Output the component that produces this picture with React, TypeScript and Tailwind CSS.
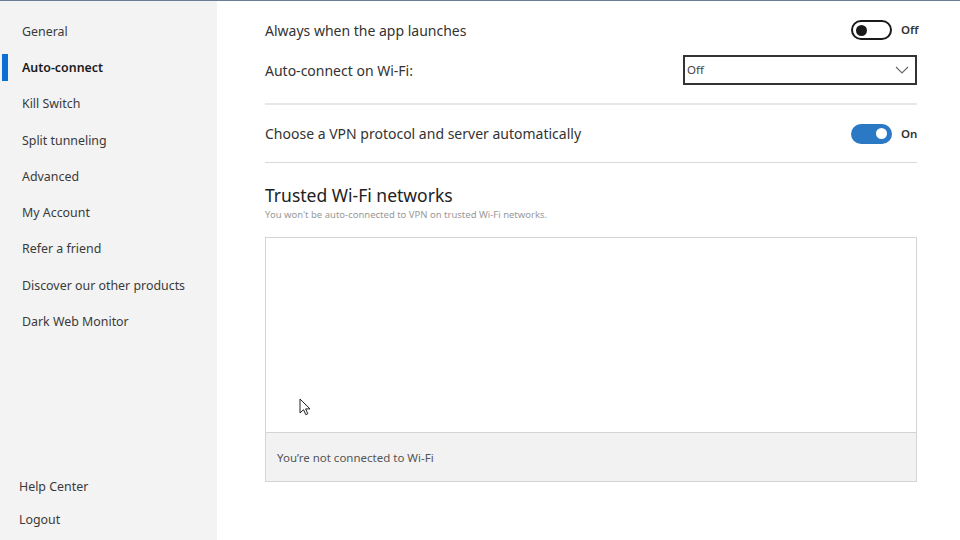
import React from "react";

const font = { fontFamily: '"Noto Sans", "Open Sans", sans-serif' };

function NavItem({ label, active }: { label: string; active?: boolean }) {
  return (
    <div className="relative flex h-[36.25px] items-center pl-[22px]">
      {active && <div className="absolute left-[2px] top-[4px] h-[27px] w-[6px] bg-[#0c6fd4]" />}
      <span className={`text-[12.4px] ${active ? "font-semibold text-[#1a1a1a]" : "text-[#3a3a3a]"}`}>{label}</span>
    </div>
  );
}

function Toggle({ on }: { on: boolean }) {
  return (
    <div className="flex items-center gap-[9px]">
      {on ? (
        <div className="flex h-[20px] w-[41px] items-center justify-end rounded-full bg-[#2b78c5] pr-[5px]">
          <div className="h-[11px] w-[11px] rounded-full bg-white" />
        </div>
      ) : (
        <div className="flex h-[20px] w-[41px] items-center rounded-full border-2 border-[#1a1a1a] pl-[3px]">
          <div className="h-[11px] w-[11px] rounded-full bg-[#1a1a1a]" />
        </div>
      )}
      <span className="w-[16px] text-[11.5px] font-semibold text-[#333]">{on ? "On" : "Off"}</span>
    </div>
  );
}

export default function App() {
  const items = [
    "General",
    "Auto-connect",
    "Kill Switch",
    "Split tunneling",
    "Advanced",
    "My Account",
    "Refer a friend",
    "Discover our other products",
    "Dark Web Monitor",
  ];
  return (
    <div style={font} className="relative flex h-[540px] w-[960px] flex-col overflow-hidden bg-white">
      <div className="h-[1px] w-full bg-[#6b7c99]" />
      <div className="flex flex-1">
        <aside className="flex w-[217px] flex-col bg-[#f3f3f3] pt-[13px]">
          {items.map((l) => (
            <NavItem key={l} label={l} active={l === "Auto-connect"} />
          ))}
          <div className="flex-1" />
          <div className="flex flex-col pb-[3px] pl-[19px]">
            <div className="flex h-[33px] items-center text-[12.4px] text-[#3a3a3a]">Help Center</div>
            <div className="flex h-[33px] items-center text-[12.4px] text-[#3a3a3a]">Logout</div>
          </div>
        </aside>
        <main className="flex w-[700px] flex-col pl-[48px]">
          <div className="flex h-[38px] items-center justify-between pt-[20px]">
            <span className="text-[14px] text-[#333]">Always when the app launches</span>
            <Toggle on={false} />
          </div>
          <div className="flex h-[48px] items-center justify-between pt-[14px]">
            <span className="text-[14px] text-[#333]">Auto-connect on Wi-Fi:</span>
            <div className="flex h-[30px] w-[234px] items-center justify-between border-2 border-[#333] pl-[2px] pr-[6px]">
              <span className="text-[11.5px] text-[#444]">Off</span>
              <svg width="14" height="8" viewBox="0 0 14 8" fill="none" stroke="#666" strokeWidth="1.1">
                <path d="M1 1l6 6 6-6" />
              </svg>
            </div>
          </div>
          <div className="mt-[16px] h-[2px] w-full bg-[#e8e8e8]" />
          <div className="flex h-[57px] items-center justify-between">
            <span className="text-[14px] text-[#333]">Choose a VPN protocol and server automatically</span>
            <Toggle on={true} />
          </div>
          <div className="h-[1px] w-full bg-[#d9d9d9]" />
          <div className="mt-[21px] text-[17.5px] leading-[22px] text-[#222]">Trusted Wi-Fi networks</div>
          <div className="mt-[2px] text-[9.5px] text-[#999]">You won't be auto-connected to VPN on trusted Wi-Fi networks.</div>
          <div className="mt-[15px] flex h-[245px] flex-col border border-[#d4d4d4]">
            <div className="flex-1 bg-white" />
            <div className="flex h-[49px] items-center border-t border-[#d4d4d4] bg-[#f2f2f2] pl-[11px] text-[11.5px] text-[#555]">
              You’re not connected to Wi-Fi
            </div>
          </div>
        </main>
      </div>
      <svg className="absolute left-[299px] top-[398px]" width="12" height="18" viewBox="0 0 12 18">
        <path d="M1 1v14l3.5-3.3 2.3 5 2-0.9-2.2-4.9H11z" fill="white" stroke="#222" strokeWidth="1" strokeLinejoin="round" />
      </svg>
    </div>
  );
}
